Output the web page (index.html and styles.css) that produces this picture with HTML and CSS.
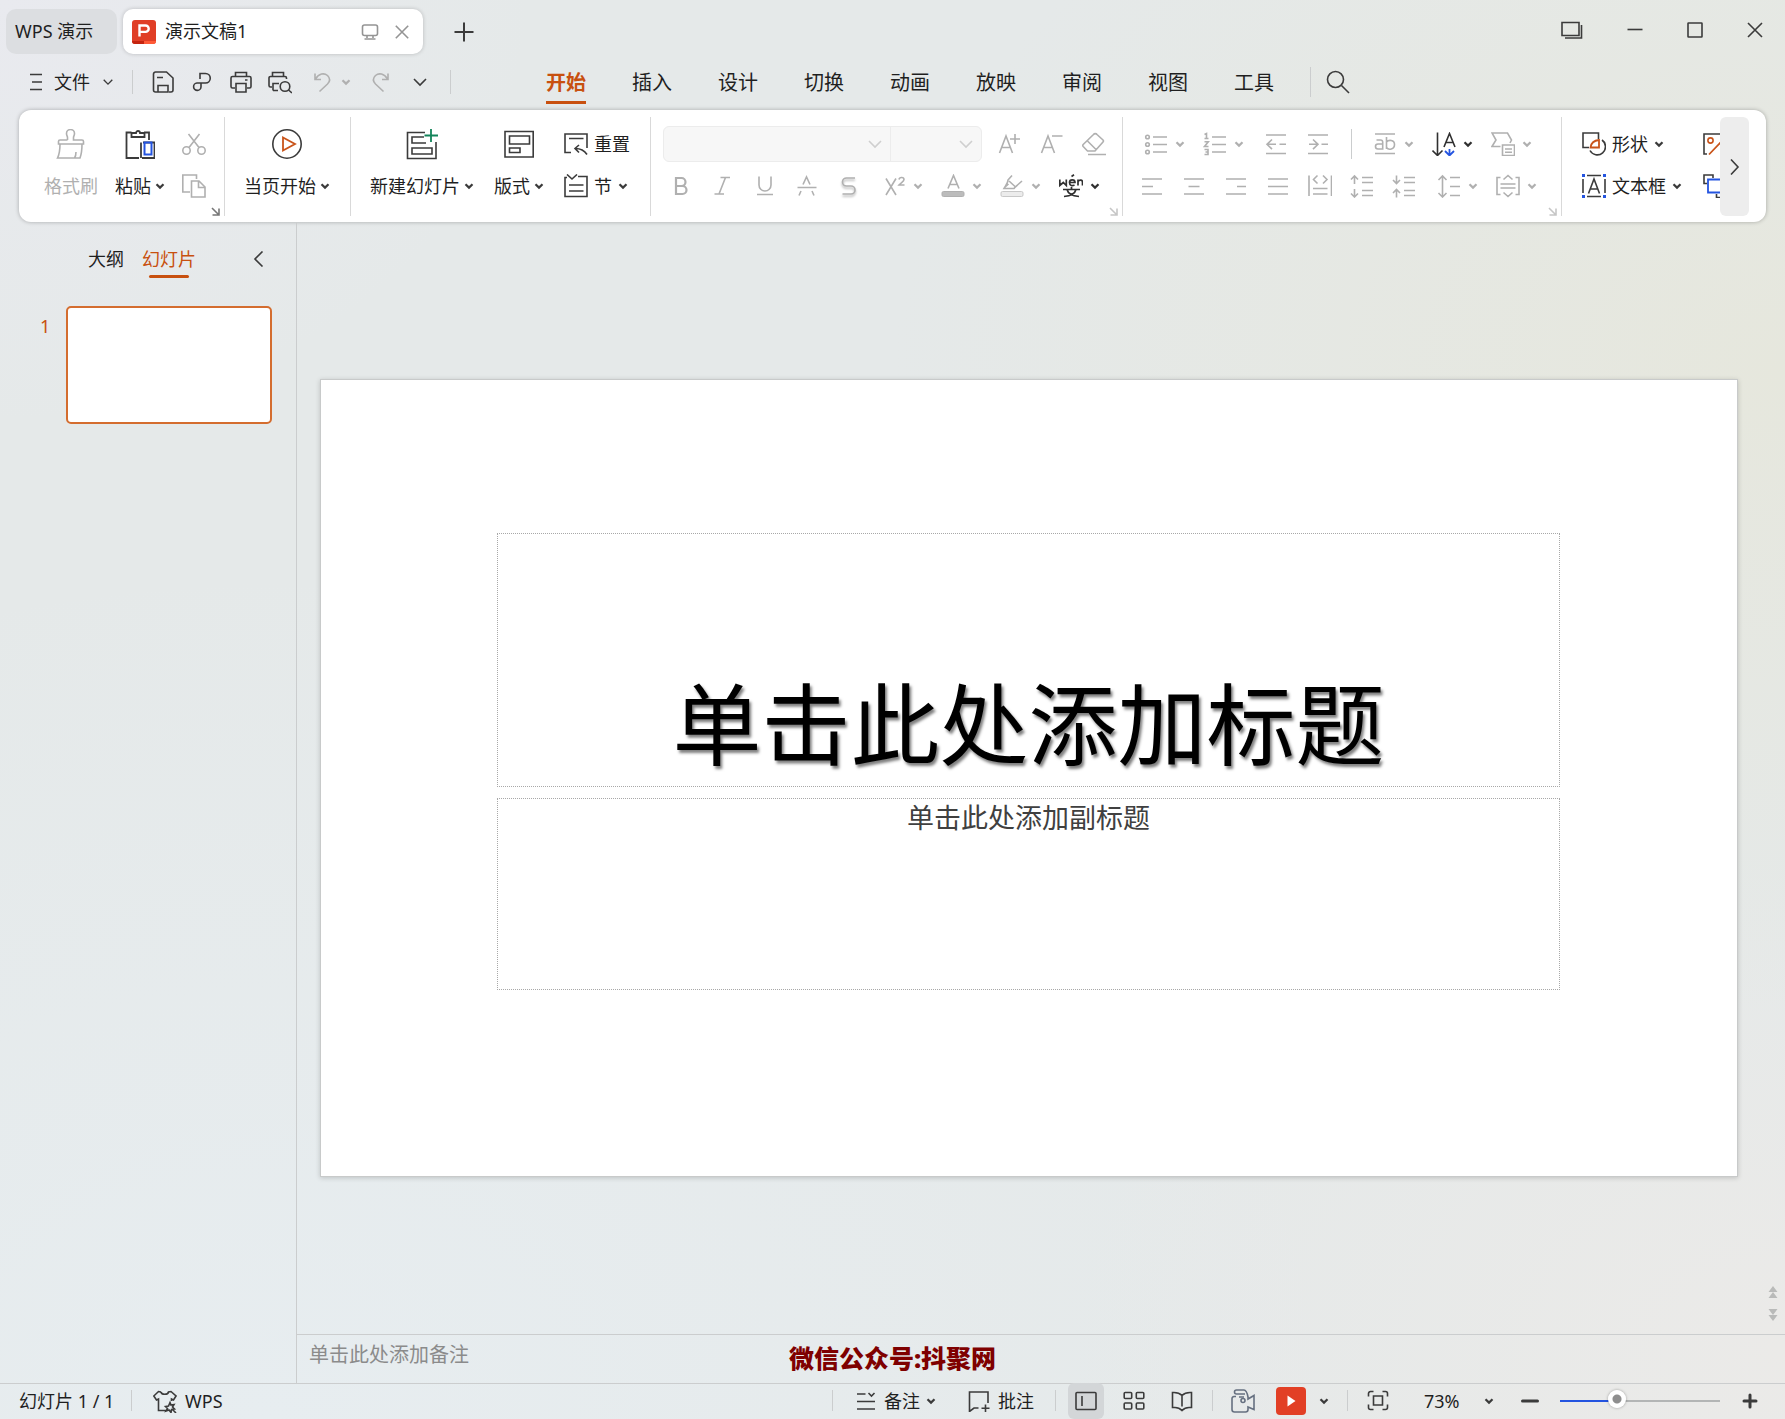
FILE: index.html
```html
<!DOCTYPE html>
<html lang="zh-CN">
<head>
<meta charset="utf-8">
<meta name="viewport" content="width=device-width, initial-scale=1">
<title>演示文稿1 - WPS 演示</title>
<link rel="stylesheet" href="styles.css">
</head>
<body>
<svg class="sprite" aria-hidden="true">
  <symbol id="caret" viewBox="0 0 10 10"><path d="M1.500 3.200 5 6.600 8.500 3.200" stroke-width="2.200"/></symbol>
  <symbol id="chevron" viewBox="0 0 14 14"><path d="M1 4 7 10 13 4"/></symbol>
  <symbol id="launcher" viewBox="0 0 9 9"><path d="M1 1 7.500 7.500M8 1.500V8H1.500"/></symbol>
</svg>
<div class="app">

  <header class="titlebar">
    <button class="doc-tab home-tab">WPS 演示</button>
    <div class="doc-tab active-tab">
      <svg class="i24 logo" viewBox="0 0 24 24"><rect width="24" height="24" rx="3" fill="#e03e26"/><path d="M0 21h12v3H3a3 3 0 0 1-3-3z" fill="#c4240f"/><path d="M12 21h12a3 3 0 0 1-3 3h-9z" fill="#ff5a37"/><path d="M7.500 16.500V5.500h6a3.200 3.200 0 0 1 0 6.400h-6" stroke="#fff" stroke-width="2.400" fill="none"/></svg>
      <span class="doc-name">演示文稿1</span>
      <button class="icon-btn muted" aria-label="窗口模式"><svg class="i18" viewBox="0 0 18 18"><rect x="1.500" y="2" width="15" height="10.500" rx="2"/><path d="M6 12.500v2.500M12 12.500v2.500M3.500 16h11"/></svg></button>
      <button class="icon-btn muted" aria-label="关闭文档"><svg class="i14" viewBox="0 0 14 14"><path d="M.8.8 13.200 13.200M13.200.8.8 13.200"/></svg></button>
    </div>
    <button class="icon-btn new-tab" aria-label="新建"><svg class="i20" viewBox="0 0 20 20"><path d="M10 .5v19M.5 10h19" stroke-width="2"/></svg></button>
    <div class="window-controls">
      <button class="win-btn stack" aria-label="多窗口"><svg class="i24" viewBox="0 0 24 24"><path d="M2 4.500h17v13H2zM21.500 7v13H5" /></svg></button>
      <button class="win-btn" aria-label="最小化"><svg class="i16" viewBox="0 0 16 16"><path d="M.5 7.500h15"/></svg></button>
      <button class="win-btn" aria-label="最大化"><svg class="i16" viewBox="0 0 16 16"><rect x="1" y="1" width="14" height="14" rx=".5"/></svg></button>
      <button class="win-btn" aria-label="关闭"><svg class="i16" viewBox="0 0 16 16"><path d="M1 1 15 15M15 1 1 15"/></svg></button>
    </div>
  </header>

  <div class="menubar">
    <button class="file-menu"><svg class="i12" viewBox="0 0 12 18"><path d="M0 1.500h12M2 9h10M0 16.500h12"/></svg><span>文件</span><svg class="i12" viewBox="0 0 14 14"><path d="M2 4.500 7 9.500 12 4.500"/></svg></button>
    <span class="rule short"></span>
    <div class="quick">
      <button class="icon-btn" aria-label="保存"><svg class="i24" viewBox="0 0 24 24"><path d="M6.500 22H4.500a2 2 0 0 1-2-2V4a2 2 0 0 1 2-2h11l6.500 6v12a2 2 0 0 1-2 2h-2M6 7.500h6M7 22v-6.500h10V22z"/></svg></button>
      <button class="icon-btn" aria-label="输出"><svg class="i24" viewBox="0 0 24 24"><path d="M10 9V3.500h5.500a4.700 4.700 0 0 1 0 9.500H7a3.700 3.700 0 1 0 4 3.700V13"/></svg></button>
      <button class="icon-btn" aria-label="打印"><svg class="i24" viewBox="0 0 24 24"><path d="M6.500 6.500v-4h11v4M6 18H3.500a1.500 1.500 0 0 1-1.500-1.500V8a1.500 1.500 0 0 1 1.500-1.500h17A1.500 1.500 0 0 1 22 8v8.500a1.500 1.500 0 0 1-1.500 1.500H18M7 13.500h10V22H7zM16 10h2.500"/></svg></button>
      <button class="icon-btn" aria-label="打印预览"><svg class="i24" viewBox="0 0 24 24"><path d="M4.500 6.500v-4h11v4M4 17H2.500A1.500 1.500 0 0 1 1 15.500V8a1.500 1.500 0 0 1 1.500-1.500H17A1.500 1.500 0 0 1 18.500 8v1M5 20.500v-7h6M5 20.500h5M20.500 20 24 23"/><circle cx="17" cy="16.500" r="4.800"/></svg></button>
      <button class="icon-btn dd off undo" aria-label="撤销"><svg class="i24" viewBox="0 0 24 24"><path d="M5 3.500V9.500h6M5.500 9C9 3.500 14 2.500 17.500 5.500c3 3 2.500 6 0 8.500L9.500 21.500"/></svg><svg class="i10"><use href="#caret"/></svg></button>
      <button class="icon-btn off" aria-label="恢复"><svg class="i24" viewBox="0 0 24 24"><path d="M19 3.500V9.500h-6M18.500 9C15 3.500 10 2.500 6.500 5.500c-3 3-2.500 6 0 8.500L14.500 21.500"/></svg></button>
      <button class="icon-btn more" aria-label="更多"><svg class="i14"><use href="#chevron"/></svg></button>
    </div>
    <span class="rule short"></span>
    <nav class="tabs">
      <button class="tab current">开始</button>
      <button class="tab">插入</button>
      <button class="tab">设计</button>
      <button class="tab">切换</button>
      <button class="tab">动画</button>
      <button class="tab">放映</button>
      <button class="tab">审阅</button>
      <button class="tab">视图</button>
      <button class="tab">工具</button>
    </nav>
    <span class="rule tall"></span>
    <button class="icon-btn search" aria-label="搜索"><svg class="i24" viewBox="0 0 24 24"><circle cx="9.500" cy="9.500" r="8"/><path d="M15.500 15.500 23 23"/></svg></button>
  </div>

  <section class="ribbon" aria-label="开始">
    <div class="group clipboard">
      <button class="big off"><svg class="i30" viewBox="0 0 30 30"><path d="M11.500 11V8.500c0-1.500-1-2-1-4a4 4 0 0 1 8 0c0 2-1 2.500-1 4V11H26a1.500 1.500 0 0 1 1.500 1.500V15h-25v-2.500A1.500 1.500 0 0 1 4 11h7.500M4 15c0 6-.5 10-2.500 14H24c1.500-4 2-8 2-14M18.500 29c1-1.500 1.500-3.500 1.500-6" /></svg><span class="label">格式刷</span></button>
      <button class="big"><svg class="i30" viewBox="0 0 30 30"><path d="M6.500 3.500H1.500V29H14M19 3.500h5V11M6.500 8V4h4.500a2 2 0 0 1 4 0h4.500v4zM16 29V13.500M18 13.500h11.500V29H17" stroke-width="1.800"/><path d="M19.500 13.500h7v12h-7z" stroke="#2454e0" stroke-width="2"/></svg><span class="label">粘贴<svg class="i10"><use href="#caret"/></svg></span></button>
      <div class="small-col off">
        <button class="icon-btn" aria-label="剪切"><svg class="i24" viewBox="0 0 24 24"><circle cx="4.500" cy="18.500" r="3.700"/><circle cx="19.500" cy="18.500" r="3.700"/><path d="M6.500 2 17 15.500M17.500 2 7 15.500"/></svg></button>
        <button class="icon-btn" aria-label="复制"><svg class="i24" viewBox="0 0 24 24"><path d="M8 18H.8V1H14.500V5M9.500 7H17l6 6v10H9.500zM16.500 7.500V13.500H22.500"/></svg></button>
      </div>
      <button class="launch" aria-label="剪贴板设置"><svg class="i9"><use href="#launcher"/></svg></button>
    </div>

    <div class="group play">
      <button class="big"><svg class="i30" viewBox="0 0 30 30"><circle cx="15" cy="15" r="14.200"/><path d="M11 8.500v13L23 15z" stroke="#c9541a" stroke-width="1.800"/></svg><span class="label">当页开始<svg class="i10"><use href="#caret"/></svg></span></button>
    </div>

    <div class="group slides">
      <button class="big"><svg class="i32" viewBox="0 0 32 32"><path d="M19 4.500H1.500V30.500H30V14M18 9H6v6h14M6 20h20v6H6z"/><path d="M25 1v13M18.500 7.500H32" stroke="#12845a" stroke-width="1.800"/></svg><span class="label">新建幻灯片<svg class="i10"><use href="#caret"/></svg></span></button>
      <button class="big"><svg class="i30" viewBox="0 0 30 30"><path d="M1 2.500h28.200v25.500H1zM5.500 7h20v8h-20zM5.500 19h10.500v4.500H5.500z"/></svg><span class="label">版式<svg class="i10"><use href="#caret"/></svg></span></button>
      <div class="small-col">
        <button class="inline-btn"><svg class="i24" viewBox="0 0 24 24"><path d="M7 20.500H1V2h22v14M5 6.500h14.500M15 13l-4 3.500 4 4M11.500 16.500c5 0 8.500 1.500 11.500 6" /></svg>重置</button>
        <button class="inline-btn"><svg class="i24" viewBox="0 0 24 24"><path d="M3 3.500H1V22.500h22v-20h-9M3 .5 8 5l5-4.500M5 11h14.500M5 17h14.500" /></svg><span class="label wide">节<svg class="i10"><use href="#caret"/></svg></span></button>
      </div>
    </div>

    <div class="group font off">
      <div class="row">
        <div class="combo">
          <label class="combo-part family"><select aria-label="字体"><option></option></select><svg class="i14"><use href="#chevron"/></svg></label>
          <label class="combo-part size"><select aria-label="字号"><option></option></select><svg class="i14"><use href="#chevron"/></svg></label>
        </div>
        <div class="cluster">
          <button class="icon-btn" aria-label="增大字号"><svg class="i24" viewBox="0 0 24 24"><path d="M1.500 21 8 4l6.500 17M3.800 15.500h8.400M17 2v10M12 7h10"/></svg></button>
          <button class="icon-btn" aria-label="减小字号"><svg class="i24" viewBox="0 0 24 24"><path d="M1.500 21 8 4l6.500 17M3.800 15.500h8.400M12 4h10.500"/></svg></button>
          <button class="icon-btn" aria-label="清除格式"><svg class="i24" viewBox="0 0 24 24"><path d="M11.500 2.500 1.200 12.500a1.500 1.500 0 0 0 0 2L5.500 19H13l8-9a1.500 1.500 0 0 0 0-2l-6-5.500a2.200 2.200 0 0 0-3.500 0zM5.500 9 14 17.500M6 22.500h18"/></svg></button>
        </div>
      </div>
      <div class="row inset">
        <div class="cluster">
          <button class="icon-btn" aria-label="加粗"><svg class="i24" viewBox="0 0 24 24"><path d="M7 4h5.500a4 4 0 0 1 0 8H7zM7 12h6.500a3.800 3.800 0 0 1 0 8H7z" stroke-width="2.200"/></svg></button>
          <button class="icon-btn" aria-label="倾斜"><svg class="i24" viewBox="0 0 24 24"><path d="M9.500 3.500H19M3.500 20H13M14.500 3.500 8 20"/></svg></button>
          <button class="icon-btn" aria-label="下划线"><svg class="i24" viewBox="0 0 24 24"><path d="M6 2.500V11a5.500 5.500 0 0 0 12 0V2.500M4 20.500h16"/></svg></button>
          <button class="icon-btn" aria-label="删除线"><svg class="i24" viewBox="0 0 24 24"><path d="M8 10.500 11.500 3 15 10.500M2.500 13.500h19M6 17l-2 4.500M17 17l2 4.500"/></svg></button>
          <button class="icon-btn shadow" aria-label="阴影"><svg class="i24" viewBox="0 0 24 24"><path d="M18 4H9.500a4 4 0 0 0 0 8H14a4 4 0 0 1 0 8H5.500"/></svg></button>
        </div>
        <div class="cluster">
          <button class="icon-btn dd" aria-label="上标"><svg class="i24" viewBox="0 0 24 24"><path d="M4 4.500 14 21M14 4.500 4 21M17 5.500c.5-3 5-2.500 5 0 0 2-3 3-5 5.500h5.500"/></svg><svg class="i10"><use href="#caret"/></svg></button>
          <button class="icon-btn dd" aria-label="字体颜色"><svg class="i24" viewBox="0 0 24 24"><path d="M7 14.500 12.500 1.500 18 14.500M9 10.500h7"/><rect x="1" y="17.500" width="22" height="5" rx="1.500" fill="#bcbcbc" stroke-width="1"/></svg><svg class="i10"><use href="#caret"/></svg></button>
          <button class="icon-btn dd" aria-label="突出显示"><svg class="i24" viewBox="0 0 24 24"><path d="M12 1.500 8 6c0 3-2 5-4 8.500h10c1-1.500 2-2 3.500-3.500L22 7M9 7l6 5.500M4 14l4.500-4"/><rect x="1" y="17.500" width="22" height="5" rx="1.500" fill="#ececec" stroke="#c8c8c8" stroke-width="1"/></svg><svg class="i10"><use href="#caret"/></svg></button>
          <button class="icon-btn dd on" aria-label="拼音指南"><svg class="i24" viewBox="0 0 24 24"><path d="M.8 5.500v6l3.500-3 3 3v-6M10.500 8.500h5.500c0-3.500-5.500-3.500-5.500 0s3 3.500 5 2.500M12.500 2.500 15 .8M19 11.500V5.500M19 7.500c1-2 4.500-2 4.500.5v3.500M4 15.500h17M12.500 13v2M8 15.500c1 4 6 6.500 12 7M17 15.500c-1 4-6 6.500-12 7" stroke-width="1.700"/></svg><svg class="i10"><use href="#caret"/></svg></button>
        </div>
      </div>
      <button class="launch" aria-label="字体设置"><svg class="i9"><use href="#launcher"/></svg></button>
    </div>

    <div class="group paragraph off">
      <div class="row inset-s">
        <div class="cluster">
          <button class="icon-btn dd" aria-label="项目符号"><svg class="i24" viewBox="0 0 24 24"><circle cx="3.500" cy="5" r="1.800"/><circle cx="3.500" cy="12.500" r="1.800"/><circle cx="3.500" cy="20" r="1.800"/><path d="M9 5h14M9 12.500h14M9 20h14"/></svg><svg class="i10"><use href="#caret"/></svg></button>
          <button class="icon-btn dd" aria-label="编号"><svg class="i24" viewBox="0 0 24 24"><path d="M1.500 2.500 3.500 1.500V6M1.500 6.500h4M1.500 9.800h3.800L1.500 14.500h4M1.500 17.500H5v5H1.500M2.500 20H5M9 5h14M9 12.500h14M9 20h14"/></svg><svg class="i10"><use href="#caret"/></svg></button>
        </div>
        <div class="cluster">
          <button class="icon-btn" aria-label="减少缩进"><svg class="i24" viewBox="0 0 24 24"><path d="M2 3h20M2 21.500h20M8 7.500 3 12.300l5 4.800M3 12.300h9M15.500 12.300H22"/></svg></button>
          <button class="icon-btn" aria-label="增加缩进"><svg class="i24" viewBox="0 0 24 24"><path d="M2 3h20M2 21.500h20M7 7.500 12 12.300l-5 4.800M3 12.300h9M15.500 12.300H22"/></svg></button>
        </div>
        <span class="rule tall"></span>
        <div class="cluster">
          <button class="icon-btn dd" aria-label="文字排列"><svg class="i24" viewBox="0 0 24 24"><path d="M2 2h20M2 21.500h20M3.500 8h4a2.200 2.200 0 0 1 2.200 2.200V17H5a2.500 2.500 0 0 1 0-5h4.500M13.500 5v12M13.500 10c2-2.500 8-2.500 8 2.500s-6 6-8 3"/></svg><svg class="i10"><use href="#caret"/></svg></button>
          <button class="icon-btn dd on" aria-label="文字方向"><svg class="i24" viewBox="0 0 24 24"><path d="M5.500.5V23M.5 18.500l5 5 5-5M12 15 17.500 1.500 23 15M14 10.500h7"/><path d="M17.500 17v6M13 19l4.500 4.500L22 19" stroke="#2454e0" stroke-width="1.800"/></svg><svg class="i10"><use href="#caret"/></svg></button>
          <button class="icon-btn dd" aria-label="转智能图形"><svg class="i24" viewBox="0 0 24 24"><path d="M9.500 14.500H1L5 8 1 1h15.500L20.500 8l-1.500 3M11.500 13h12v10.500h-12zM14 17h7M14 20.200h7"/></svg><svg class="i10"><use href="#caret"/></svg></button>
        </div>
      </div>
      <div class="row">
        <div class="cluster">
          <button class="icon-btn" aria-label="左对齐"><svg class="i24" viewBox="0 0 24 24"><path d="M2 5h20M2 12.500h11M2 20h20"/></svg></button>
          <button class="icon-btn" aria-label="居中对齐"><svg class="i24" viewBox="0 0 24 24"><path d="M2 5h20M6.500 12.500h11M2 20h20"/></svg></button>
          <button class="icon-btn" aria-label="右对齐"><svg class="i24" viewBox="0 0 24 24"><path d="M2 5h20M13 12.500h9M2 20h20"/></svg></button>
          <button class="icon-btn" aria-label="两端对齐"><svg class="i24" viewBox="0 0 24 24"><path d="M2 5h20M2 12.500h20M2 20h20"/></svg></button>
          <button class="icon-btn" aria-label="分散对齐"><svg class="i24" viewBox="0 0 24 24"><path d="M1 1.500V22M23.500 1.500V22M9.500 1.500 5.500 5.500l4 4M15 1.500l4 4-4 4M5 14.500h14.500M5 20h14.500"/></svg></button>
          <button class="icon-btn" aria-label="增加段距"><svg class="i24" viewBox="0 0 24 24"><path d="M4.500 10V2M1 5.500 4.500 2 8 5.500M4.500 15v8M1 19.500 4.500 23 8 19.500M12 3.500h11M12 8.500h11M12 16.500h11M12 21.500h11"/></svg></button>
          <button class="icon-btn" aria-label="减少段距"><svg class="i24" viewBox="0 0 24 24"><path d="M4.500 1.500v8M1 6 4.500 9.500 8 6M4.500 15.500v8M1 19 4.500 15.500 8 19M12 3.500h11M12 8.500h11M12 16.500h11M12 21.500h11"/></svg></button>
        </div>
        <div class="cluster">
          <button class="icon-btn dd" aria-label="行距"><svg class="i24" viewBox="0 0 24 24"><path d="M5.500 2v21M1.500 6l4-4 4 4M1.500 19l4 4 4-4M13 3.500h10M13 12.500h10M13 21.500h10"/></svg><svg class="i10"><use href="#caret"/></svg></button>
          <button class="icon-btn dd" aria-label="对齐文本"><svg class="i24" viewBox="0 0 24 24"><path d="M4.500 3.500H1v17h3.500M19.500 3.500H23v17h-3.500M7.500 5.500 12 1.500 16.500 5.500M4.500 10h15M4.500 14h15M7.500 18.500l4.500 4 4.500-4"/></svg><svg class="i10"><use href="#caret"/></svg></button>
        </div>
      </div>
      <button class="launch" aria-label="段落设置"><svg class="i9"><use href="#launcher"/></svg></button>
    </div>

    <div class="group insert">
      <div class="small-col text-col">
        <button class="inline-btn"><svg class="i24" viewBox="0 0 24 24"><path d="M7 15.500H1V1h15.500V7M20 8a8.200 8.200 0 1 1-12 10.500"/><path d="M8.500 15.500c.5-4 3-7 8.500-7.500v7.500z" stroke="#c9541a" stroke-width="1.800"/></svg><span class="label wide">形状<svg class="i10"><use href="#caret"/></svg></span></button>
        <button class="inline-btn"><svg class="i24" viewBox="0 0 24 24"><path d="M1 5v14M23 5v14M5 1.500h14M5 22.500h14M6.500 19.500 12 5l5.500 14.500M8.500 15h7"/><path d="M0 0h3v3H0zM21 0h3v3h-3zM0 21h3v3H0zM21 21h3v3h-3z" fill="#2454e0" stroke="none"/></svg><span class="label wide">文本框<svg class="i10"><use href="#caret"/></svg></span></button>
      </div>
      <div class="small-col">
        <button class="icon-btn" aria-label="图片"><svg class="i24" viewBox="0 0 24 24"><path d="M4 22H1V2h22v20h-3"/><circle cx="7.500" cy="8.500" r="2.600" stroke="#c9541a"/><path d="M6 22.500 17 11l6 6" stroke="#c9541a" stroke-width="1.800"/></svg></button>
        <button class="icon-btn" aria-label="排列"><svg class="i24" viewBox="0 0 24 24"><path d="M4 9.500H1V1h9v3M13.500 20v3.500H23V15h-3"/><path d="M5 5.500h14v13H5z" stroke="#2454e0" stroke-width="1.800"/></svg></button>
      </div>
    </div>
    <button class="ribbon-next" aria-label="更多功能"><svg class="i16" viewBox="0 0 16 16"><path d="M4 .5 11 8 4 15.500"/></svg></button>
  </section>

  <main class="workspace">
    <aside class="sidebar">
      <div class="side-head">
        <button class="side-tab">大纲</button>
        <button class="side-tab current">幻灯片</button>
        <button class="icon-btn collapse" aria-label="收起"><svg class="i16" viewBox="0 0 16 16"><path d="M11.500.5 4 8l7.500 7.500"/></svg></button>
      </div>
      <ol class="thumbs">
        <li class="thumb-item"><span class="thumb-no">1</span><button class="thumb" aria-label="幻灯片 1"></button></li>
      </ol>
    </aside>

    <div class="editor">
      <div class="stage">
        <article class="slide">
          <h1 class="placeholder title-box">单击此处添加标题</h1>
          <p class="placeholder sub-box">单击此处添加副标题</p>
        </article>
        <div class="page-jump">
          <button class="icon-btn" aria-label="上一张"><svg class="i12" viewBox="0 0 12 12"><path d="M6 0 10.500 6h-9zM6 6l4.500 6h-9z"/></svg></button>
          <button class="icon-btn" aria-label="下一张"><svg class="i12" viewBox="0 0 12 12"><path d="M6 6 10.500 0h-9zM6 12l4.500-6h-9z"/></svg></button>
        </div>
      </div>
      <div class="notes"><input class="notes-input" type="text" aria-label="备注" placeholder="单击此处添加备注"></div>
    </div>
  </main>

  <div class="watermark">微信公众号:抖聚网</div>

  <footer class="statusbar">
    <span class="page-count">幻灯片 1 / 1</span>
    <span class="rule bar"></span>
    <button class="skin"><svg class="i24" viewBox="0 0 24 24"><path d="M8 3C8.500 6 15 6 15.500 3L18 2.500 23 7l-2.500 4-2-1V12M8 3 5.500 2.500.8 7l2.700 4 2-1v11.500h7.500M17 13.500l1 2.500 3-.5-1.500 2.500 2 2-3 .5-.5 3-2-2.500-3 1 1.500-2.500-2-2 3-.5zM19.500 20.500 23 24"/></svg>WPS</button>

    <div class="status-tools">
      <span class="rule bar"></span>
      <button class="text-tool"><svg class="i20" viewBox="0 0 20 20"><path d="M1 3h8.500M1 10.500h18M1 18h18M12.500 2 15.500 5 18.500 2"/></svg><span class="label wide">备注<svg class="i10"><use href="#caret"/></svg></span></button>
      <button class="text-tool"><svg class="i22" viewBox="0 0 22 22"><path d="M10.500 18H6L1.500 21.500V2H20v11M17.500 14.500V22M13.500 18.200h8"/></svg>批注</button>
      <span class="rule bar"></span>
      <button class="view-btn active" aria-label="普通视图"><svg class="i22" viewBox="0 0 22 22"><rect x="1" y="2.500" width="20" height="17" rx="1"/><path d="M7 6v10"/></svg></button>
      <button class="view-btn" aria-label="幻灯片浏览"><svg class="i22" viewBox="0 0 22 22"><rect x="1.200" y="2.500" width="7.500" height="6" rx="1"/><rect x="13.300" y="2.500" width="7.500" height="6" rx="1"/><rect x="1.200" y="13" width="7.500" height="6" rx="1"/><rect x="13.300" y="13" width="7.500" height="6" rx="1"/></svg></button>
      <button class="view-btn" aria-label="阅读视图"><svg class="i22" viewBox="0 0 22 22"><path d="M11 5.500C9 3.500 7 2.500 3 2.500H1.500v15H4c3 0 5 1 7 3 2-2 4-3 7-3h2.500v-15H19c-4 0-6 1-8 3zM11 5.500v11"/></svg></button>
      <span class="rule bar"></span>
      <button class="view-btn slate" aria-label="录制"><svg class="i24" viewBox="0 0 24 24"><path d="M3 7.500h2M14 5H5.500a2 2 0 0 1 0-4H13c2 0 3 2 4 7v2l6-3.500v14L17 18v2.500a2.500 2.500 0 0 1-2.500 2.500h-11A2.500 2.500 0 0 1 1 20.500v-11a2 2 0 0 1 2-2M8 8h5"/><circle cx="12" cy="11.500" r="2"/></svg></button>
      <div class="play-split">
        <button class="play-btn" aria-label="放映"><svg class="i12" viewBox="0 0 12 12"><path d="M2.500.5v11L10.500 6z"/></svg></button>
        <button class="icon-btn" aria-label="放映选项"><svg class="i10"><use href="#caret"/></svg></button>
      </div>
      <span class="rule bar"></span>
      <button class="view-btn" aria-label="适应窗口"><svg class="i22" viewBox="0 0 22 22"><path d="M1.500 6.500v-3a2 2 0 0 1 2-2h3M15.500 1.500h3a2 2 0 0 1 2 2v3M20.500 14.500v3a2 2 0 0 1-2 2h-3M6.500 19.500h-3a2 2 0 0 1-2-2v-3M6.500 6h9v9h-9z"/></svg></button>
      <label class="zoom-pick"><select aria-label="缩放比例"><option>73%</option></select><svg class="i10"><use href="#caret"/></svg></label>
      <button class="view-btn" aria-label="缩小"><svg class="i18" viewBox="0 0 18 18"><path d="M1.500 9h15" stroke-width="3" stroke-linecap="round"/></svg></button>
      <input class="zoom-range" type="range" min="0" max="100" value="34" aria-label="缩放">
      <button class="view-btn" aria-label="放大"><svg class="i18" viewBox="0 0 18 18"><path d="M3 9h12M9 3v12" stroke-width="3" stroke-linecap="round"/></svg></button>
    </div>
  </footer>
</div>
</body>
</html>
```
FILE: styles.css
```css
* { box-sizing: border-box; }

:root {
  --ink: #1f1f1f;
  --line: #3b3b3b;
  --off: #b0b0b0;
  --accent: #c8500f;
  --rule: #cbcdce;
}

body {
  margin: 0;
  font: 18px/24px "Noto Sans", "Noto Sans CJK SC", sans-serif;
  color: var(--ink);
}

button, input, select { font: inherit; color: inherit; }

button {
  display: flex;
  align-items: center;
  justify-content: center;
  margin: 0;
  padding: 0;
  border: 0;
  background: none;
  white-space: nowrap;
}

svg {
  display: block;
  flex: none;
  fill: none;
  stroke: var(--line);
  stroke-width: 1.6;
}

.sprite { position: absolute; width: 0; height: 0; }
.i9 { width: 9px; height: 9px; }
.i10 { width: 10px; height: 10px; }
.i12 { width: 12px; height: 18px; }
.i14 { width: 14px; height: 14px; }
.i16 { width: 16px; height: 16px; }
.i18 { width: 18px; height: 18px; }
.i20 { width: 20px; height: 20px; }
.i22 { width: 22px; height: 22px; }
.i24 { width: 24px; height: 24px; }
.i30 { width: 30px; height: 30px; }
.i32 { width: 32px; height: 32px; }

.off { --line: var(--off); --ink: var(--off); color: var(--off); }
.on { --line: #303030; }
.muted { --line: #949494; }

.rule { flex: none; width: 1px; background: var(--rule); }
.rule.short { height: 24px; }
.rule.tall { height: 30px; }
.rule.bar { height: 21px; }

.app {
  position: relative;
  display: flex;
  flex-direction: column;
  min-height: 100vh;
  background:
    radial-gradient(ellipse 50% 45% at 100% 26%, #e6e7dd 0%, rgba(230, 231, 222, 0) 100%),
    radial-gradient(ellipse 30% 30% at 0% 0%, #e9eaef 0%, rgba(233, 234, 239, 0) 100%),
    radial-gradient(ellipse 40% 35% at 100% 95%, #ebeae8 0%, rgba(235, 234, 232, 0) 100%),
    radial-gradient(ellipse 60% 60% at 15% 100%, #e7edf0 0%, rgba(231, 237, 240, 0) 100%),
    #e5e9e9;
}

/* title bar */
.titlebar { display: flex; align-items: center; gap: 6px; padding: 9px 0 0 6px; }
.doc-tab { height: 45px; border-radius: 10px; }
.home-tab { justify-content: flex-start; width: 111px; padding: 0 0 2px 9px; background: #dcdee1; }
.active-tab {
  display: flex;
  align-items: center;
  width: 300px;
  padding: 0 14px 0 9px;
  gap: 16px;
  background: #fff;
  box-shadow: 0 0 4px rgba(0, 0, 0, .2);
}
.logo { stroke: none; }
.doc-name { flex: 1; margin-left: -7px; padding-bottom: 2px; }
.new-tab { margin-left: 25px; }
.window-controls { display: flex; margin-left: auto; padding-bottom: 3px; }
.win-btn { width: 60px; height: 42px; }
.win-btn.stack { padding-right: 6px; }

/* menu bar */
.menubar { display: flex; align-items: center; height: 56px; padding-left: 30px; }
.file-menu { gap: 12px; margin-right: 18px; }
.quick { display: flex; align-items: center; gap: 15px; padding: 0 18px; }
.dd { gap: 7px; }
.quick .undo { margin: 0 3px; }
.quick .more { margin: 0 5px; }
.tabs { display: flex; gap: 46px; margin: 0 36px 0 95px; }
.tab {
  padding-top: 4px;
  border-bottom: 3px solid transparent;
  font-size: 20px;
  line-height: 36px;
}
.tab.current { border-color: var(--accent); color: var(--accent); font-weight: 700; }
.search { margin-left: 15px; }

/* ribbon */
.ribbon {
  display: flex;
  margin: 0 19px;
  padding: 7px 17px 6px 0;
  height: 112px;
  border-radius: 12px;
  background: #fff;
  box-shadow: 0 0 4px rgba(0, 0, 0, .28);
}
.group {
  position: relative;
  flex: none;
  display: flex;
  padding-top: 6px;
  border-right: 1px solid #d9d9d9;
}
.clipboard { gap: 17px; padding-left: 25px; padding-right: 18px; }
.play { padding-left: 19px; padding-right: 20px; }
.slides { gap: 20px; padding-left: 19px; padding-right: 20px; }
.big { display: grid; grid-template-rows: 42px 42px; align-content: start; place-items: center; color: var(--ink); }
.label { display: flex; align-items: center; gap: 4px; }
.label.wide { gap: 6px; }
.small-col { display: grid; grid-template-rows: 42px 42px; align-content: start; justify-items: start; }
.inline-btn { gap: 6px; }
.launch { position: absolute; right: 4px; bottom: 0; --line: #c6c6c6; }
.clipboard .launch { --line: #777; }

.font, .paragraph { flex-direction: column; }
.font { padding-left: 12px; padding-right: 16px; }
.paragraph { padding-left: 17px; padding-right: 24px; }
.row { display: flex; align-items: center; gap: 21px; height: 42px; }
.row.inset { padding-left: 6px; }
.row.inset-s { gap: 20px; padding-left: 4px; }
.row .rule { margin: 0 1px; }
.cluster { display: flex; gap: 18px; }
.font .row:first-child { gap: 16px; }
.shadow svg { filter: drop-shadow(0 2px 1px rgba(0, 0, 0, .3)); }

.combo {
  display: grid;
  grid-template-columns: 227px 90px;
  height: 36px;
  border: 1px solid #ececec;
  border-radius: 6px;
  background: #f7f7f7;
}
.combo-part { display: grid; align-items: center; justify-items: end; padding-right: 8px; --line: #cfcfcf; }
.combo-part.family { border-right: 1px solid #ececec; }
.combo-part > * { grid-area: 1 / 1; }
.combo select, .zoom-pick select { width: 100%; height: 100%; border: 0; background: none; appearance: none; }
.combo-part svg, .zoom-pick svg { pointer-events: none; }

.insert { flex: 1; min-width: 0; gap: 21px; padding-left: 20px; border-right: 0; overflow: hidden; }
.insert .small-col { flex: none; }
.ribbon-next { flex: none; width: 29px; border-radius: 6px; background: #ededed; }

/* workspace */
.workspace { flex: 1; display: flex; }
.sidebar { flex: none; width: 297px; border-right: 1px solid var(--rule); }
.side-head { display: flex; gap: 18px; padding: 20px 29px 0 88px; }
.side-tab { position: relative; height: 36px; padding-bottom: 2px; }
.side-tab.current { color: var(--accent); }
.side-tab.current::after {
  content: "";
  position: absolute;
  left: 7px;
  right: 7px;
  bottom: 0;
  height: 3px;
  border-radius: 2px;
  background: var(--accent);
}
.collapse { margin-left: auto; padding-bottom: 2px; }
.thumbs { margin: 0; padding: 28px 24px 0 40px; list-style: none; }
.thumb-item { display: flex; }
.thumb-no { width: 26px; padding-top: 8px; color: var(--accent); }
.thumb { flex: 1; aspect-ratio: 206 / 118; border: 2px solid #d46d2f; border-radius: 5px; background: #fff; }

.editor { flex: 1; min-width: 0; display: flex; flex-direction: column; }
.stage { position: relative; flex: 1; display: flex; align-items: center; padding: 0 47px 0 23px; }
.slide {
  flex: 1;
  display: grid;
  grid-template: 153fr 255fr 11fr 193fr 186fr / 176fr 1065fr 177fr;
  aspect-ratio: 1418 / 798;
  border: 1px solid #c8caca;
  background: #fff;
  box-shadow: 0 1px 5px rgba(0, 0, 0, .18);
}
.placeholder { margin: 0; border: 1px dotted #a8a8a8; text-align: center; }
.title-box {
  grid-area: 2 / 2;
  align-content: end;
  padding-bottom: 10px;
  font-size: 89px;
  line-height: 104px;
  font-weight: 400;
  color: #000;
  text-shadow: 2px 3px 3px rgba(0, 0, 0, .5);
}
.sub-box { grid-area: 4 / 2; font-size: 27px; line-height: 38px; color: #404040; }
.page-jump { position: absolute; right: 6px; bottom: 10px; display: grid; gap: 5px; }
.page-jump svg { fill: #b9bab9; stroke: none; }

.notes { display: flex; height: 49px; padding: 0 12px; border-top: 1px solid var(--rule); }
.notes-input { flex: 1; height: 38px; padding: 0; border: 0; background: none; font-size: 20px; }
.notes-input::placeholder { color: #8b8b8b; opacity: 1; }

.watermark {
  position: absolute;
  left: 0;
  right: 0;
  bottom: 47px;
  text-align: center;
  font-size: 25px;
  line-height: 28px;
  font-weight: 900;
  color: #7f0000;
  pointer-events: none;
}

/* status bar */
.statusbar { display: flex; align-items: center; height: 36px; padding: 0 17px 2px 19px; border-top: 1px solid var(--rule); white-space: nowrap; }
.page-count { min-width: 98px; margin-right: 14px; }
.skin { gap: 8px; margin-left: 21px; }
.status-tools { display: flex; align-items: center; gap: 12px; margin-left: auto; }
.text-tool { gap: 8px; padding: 0 9px 0 11px; }
.view-btn { width: 36px; height: 36px; border-radius: 6px; }
.view-btn.active { background: #d3d6d8; }
.slate { --line: #667080; }
.play-split { display: flex; align-items: center; gap: 13px; padding: 0 6px 0 3px; }
.play-btn { width: 30px; height: 28px; border-radius: 4px; background: #e23f25; }
.play-btn svg { fill: #fff; stroke: none; }
.zoom-pick { display: grid; align-items: center; justify-items: end; width: 92px; padding: 0 6px 0 16px; }
.zoom-pick > * { grid-area: 1 / 1; }
.zoom-pick select { padding: 0; }

.zoom-range { appearance: none; width: 160px; height: 20px; margin: 0; background: none; }
.zoom-range::-webkit-slider-runnable-track {
  height: 2px;
  background: linear-gradient(90deg, #2454e0 36%, #b3b5b5 36%);
}
.zoom-range::-webkit-slider-thumb {
  appearance: none;
  width: 18px;
  height: 18px;
  margin-top: -10px;
  border-radius: 50%;
  background: radial-gradient(circle, #8e8e8e 4px, #fff 5px);
  box-shadow: 0 0 3px rgba(0, 0, 0, .35);
}
```
